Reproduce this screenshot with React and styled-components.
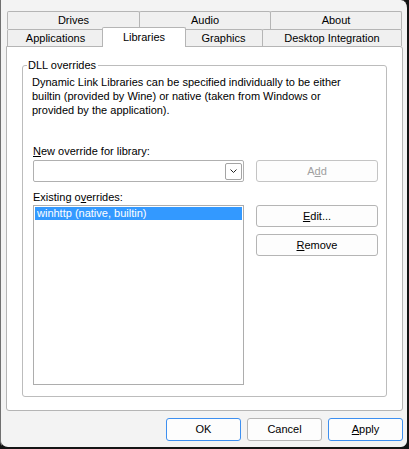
import React from 'react';
import styled, { createGlobalStyle } from 'styled-components';

const GlobalStyle = createGlobalStyle`
  html, body {
    margin: 0;
    padding: 0;
    background: #141414;
  }
  * {
    box-sizing: border-box;
  }
  body {
    font-family: "Liberation Sans", Arial, sans-serif;
    font-size: 11px;
    color: #000;
  }
`;

const Window = styled.div`
  width: 409px;
  height: 449px;
  background: #f3f3f3;
  border-left: 1px solid #707070;
  border-right: 2px solid #141414;
  border-bottom: 2px solid #141414;
  border-radius: 0 8px 8px 8px;
  padding: 11px 4px 0 5px;
  display: flex;
  flex-direction: column;
`;

const TabRow = styled.div`
  display: flex;
  align-items: flex-start;
  height: ${p => p.$height}px;
  margin: 0 1px;
`;

const Tab = styled.div`
  flex: 0 0 ${p => p.$width}px;
  height: ${p => p.$height}px;
  margin-left: -1px;
  border: 1px solid #b5b5b5;
  border-bottom: none;
  border-radius: 2px 2px 0 0;
  background: #f0f0f0;
  display: flex;
  align-items: center;
  justify-content: center;
  line-height: 13px;
  white-space: nowrap;

  &:first-child {
    margin-left: 0;
  }
`;

const ActiveTab = styled(Tab)`
  position: relative;
  z-index: 1;
  flex-basis: ${p => p.$width + 2}px;
  height: ${p => p.$height + 3}px;
  margin: -2px -1px 0 -2px;
  background: #fff;
`;

const Panel = styled.div`
  height: 365px;
  background: #fff;
  border: 1px solid #b5b5b5;
  border-radius: 0 3px 3px 3px;
  padding: 12px 15px 0;
`;

const Group = styled.fieldset`
  margin: 0;
  min-width: 0;
  width: 365px;
  border: 1px solid #bcbcbc;
  border-radius: 3px;
  padding: 0 10px 11px;
`;

const Legend = styled.legend`
  margin-left: -6px;
  padding: 0 2px 0 1px;
  line-height: 13px;
`;

const Description = styled.p`
  margin: 3px 0 0 -1px;
  line-height: 14px;
  white-space: nowrap;
`;

const Form = styled.div`
  display: grid;
  grid-template-columns: 211px 122px;
  column-gap: 12px;
  margin-top: 27px;
`;

const Label = styled.div`
  grid-column: 1 / span 2;
  line-height: 14px;
  margin-top: ${p => p.$top || 0}px;
  margin-bottom: ${p => p.$bottom || 0}px;
`;

const Combo = styled.div`
  height: 22px;
  background: #fff;
  border: 1px solid #b0b0b0;
  border-radius: 2px;
  display: flex;
  justify-content: flex-end;
  align-items: center;
  padding-right: 1px;
`;

const DropButton = styled.div`
  width: 17px;
  height: 17px;
  border: 1px solid #a4a4a4;
  border-radius: 2px;
  display: flex;
  align-items: center;
  justify-content: center;
`;

const Button = styled.div`
  height: ${p => p.$height || 22}px;
  width: ${p => (p.$width ? `${p.$width}px` : 'auto')};
  background: #fdfdfd;
  border: 1px solid ${p => (p.$focus ? '#3d8ff0' : p.$disabled ? '#c4c4c4' : '#b5b5b5')};
  border-radius: 3px;
  color: ${p => (p.$disabled ? '#a0a0a0' : '#000')};
  display: flex;
  align-items: center;
  justify-content: center;
  line-height: 13px;
`;

const ButtonColumn = styled.div`
  display: flex;
  flex-direction: column;
  gap: 7px;
`;

const List = styled.div`
  height: 180px;
  background: #fff;
  border: 1px solid #adadad;
  padding: 1px;
`;

const ListItem = styled.div`
  height: 13px;
  line-height: 13px;
  padding-left: 2px;
  background: ${p => (p.$selected ? '#3399ff' : 'transparent')};
  color: ${p => (p.$selected ? '#fff' : '#000')};
  white-space: nowrap;
`;

const Footer = styled.div`
  display: flex;
  justify-content: flex-end;
  gap: 6px;
  margin-top: 7px;
`;

const Key = styled.span`
  text-decoration: underline;
  text-underline-offset: 1px;
`;

const Chevron = () => (
  <svg width="7" height="4" viewBox="0 0 7 4">
    <path d="M0.5 0.5 L3.5 3.5 L6.5 0.5" fill="none" stroke="#222" strokeWidth="1" />
  </svg>
);

const App = () => (
  <>
    <GlobalStyle />
    <Window>
      <TabRow $height={18}>
        <Tab $width={133} $height={18}>Drives</Tab>
        <Tab $width={132} $height={18}>Audio</Tab>
        <Tab $width={132} $height={18}>About</Tab>
      </TabRow>
      <TabRow $height={17}>
        <Tab $width={97} $height={17}>Applications</Tab>
        <ActiveTab $width={82} $height={17}>Libraries</ActiveTab>
        <Tab $width={79} $height={17}>Graphics</Tab>
        <Tab $width={140} $height={17}>Desktop Integration</Tab>
      </TabRow>
      <Panel>
        <Group>
          <Legend>DLL overrides</Legend>
          <Description>
            Dynamic Link Libraries can be specified individually to be either
            <br />
            builtin (provided by Wine) or native (taken from Windows or
            <br />
            provided by the application).
          </Description>
          <Form>
            <Label $bottom={2}>
              <Key>N</Key>ew override for library:
            </Label>
            <Combo>
              <DropButton>
                <Chevron />
              </DropButton>
            </Combo>
            <Button $disabled>
              A<Key>d</Key>d
            </Button>
            <Label $top={8} $bottom={1}>
              Existing o<Key>v</Key>errides:
            </Label>
            <List>
              <ListItem $selected>winhttp (native, builtin)</ListItem>
            </List>
            <ButtonColumn>
              <Button>
                <Key>E</Key>dit...
              </Button>
              <Button>
                <Key>R</Key>emove
              </Button>
            </ButtonColumn>
          </Form>
        </Group>
      </Panel>
      <Footer>
        <Button $width={75} $height={23} $focus>OK</Button>
        <Button $width={75} $height={23}>Cancel</Button>
        <Button $width={75} $height={23} $focus>
          <Key>A</Key>pply
        </Button>
      </Footer>
    </Window>
  </>
);

export default App;
